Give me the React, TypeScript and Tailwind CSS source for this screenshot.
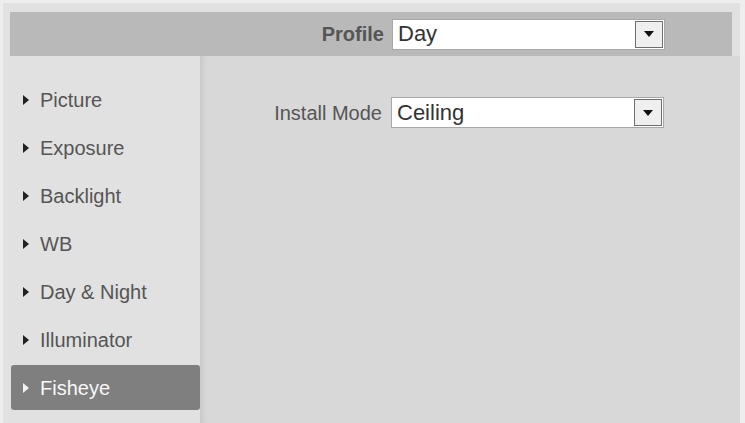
import React from 'react';

const menuItems = ['Picture', 'Exposure', 'Backlight', 'WB', 'Day & Night', 'Illuminator', 'Fisheye'];

function SelectBox({ value }: { value: string }) {
  return (
    <div className="flex h-[31px] w-[273px] items-stretch border border-[#a8a8a8] bg-white">
      <div className="flex flex-1 items-center pl-[5px] text-[22px] leading-none text-[#333]">{value}</div>
      <div className="m-[1px] flex w-[28px] items-center justify-center border border-[#6f6f6f] bg-[#efefef]">
        <div className="h-0 w-0 border-x-[5px] border-t-[6px] border-x-transparent border-t-[#111]" />
      </div>
    </div>
  );
}

function MenuItem({ label, active }: { label: string; active?: boolean }) {
  return (
    <div
      className={
        active
          ? 'flex h-[45px] items-center rounded-[3px] bg-[#7f7f7f] pl-[12px] text-[#f7f7f7]'
          : 'flex h-[45px] items-center pl-[12px] text-[#555]'
      }
    >
      <div
        className={
          active
            ? 'h-0 w-0 border-y-[5px] border-l-[6px] border-y-transparent border-l-[#f2f2f2]'
            : 'h-0 w-0 border-y-[5px] border-l-[6px] border-y-transparent border-l-[#222]'
        }
      />
      <span className="ml-[11px] text-[20px] leading-none">{label}</span>
    </div>
  );
}

export default function App() {
  return (
    <div className="h-[423px] w-[745px] overflow-hidden bg-[#eeeeee] pl-[3px] pt-[3px] font-['Liberation_Sans',Arial,sans-serif]">
      <div className="flex h-[420px] w-[737px] flex-col bg-[#e1e1e1] pl-[7px] pt-[9px]">
        <div className="mr-[8px] flex h-[44px] items-center bg-[#b9b9b9]">
          <div className="w-[374px] text-right text-[20px] font-bold leading-none text-[#555]">Profile</div>
          <div className="ml-[8px]">
            <SelectBox value="Day" />
          </div>
        </div>
        <div className="flex flex-1">
          <div className="flex w-[190px] flex-col gap-[3px] pl-[1px] pt-[21px]">
            {menuItems.map((item) => (
              <MenuItem key={item} label={item} active={item === 'Fisheye'} />
            ))}
          </div>
          <div className="flex-1 bg-[#d8d8d8] pt-[41px] shadow-[inset_6px_0_5px_-3px_rgba(0,0,0,0.08)]">
            <div className="flex items-center">
              <div className="w-[182px] text-right text-[20px] leading-none text-[#555]">Install Mode</div>
              <div className="ml-[9px]">
                <SelectBox value="Ceiling" />
              </div>
            </div>
          </div>
        </div>
      </div>
    </div>
  );
}
